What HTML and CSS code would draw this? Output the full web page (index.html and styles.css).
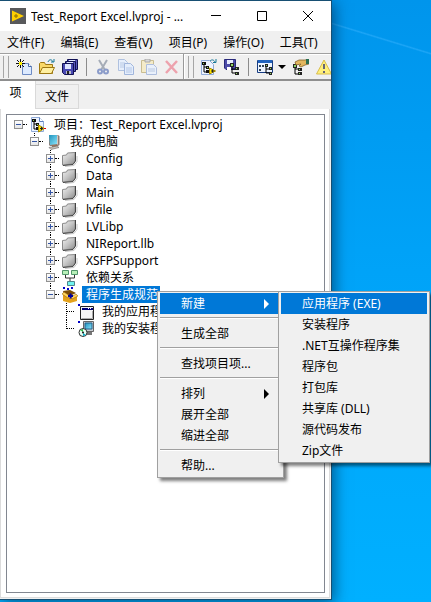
FILE: index.html
```html
<!DOCTYPE html>
<html lang="zh-CN">
<head>
<meta charset="utf-8">
<meta name="viewport" content="width=device-width, initial-scale=1">
<title>Test_Report Excel.lvproj</title>
<link rel="stylesheet" href="styles.css">
</head>
<body>
<svg class="defs" aria-hidden="true">
  <defs>
    <linearGradient id="gray" x1="0" y1="0" x2="1" y2="1"><stop offset="0" stop-color="#f2f2f2"/><stop offset=".5" stop-color="#c4c4c4"/><stop offset="1" stop-color="#8a8a8a"/></linearGradient>
    <linearGradient id="screen" x1="0" y1="0" x2="1" y2="1"><stop offset="0" stop-color="#1f93bd"/><stop offset="1" stop-color="#8be4fb"/></linearGradient>
    <symbol id="folder" viewBox="0 0 16 16"><path d="M3 15.500l9-1 3-4V5" fill="none" stroke="#c8c8c8" stroke-width="1"/><path d="M.500 4.500V14l10.500-1 2-3V1.500L5.500 2l-1 2z" fill="url(#gray)" stroke="#8a8a8a"/><path d="M13.500 1v9L11 13.500l-10 1" fill="none" stroke="#444"/></symbol>
    <symbol id="project" viewBox="0 0 16 16"><path d="M1.500.500h8l4 4v10h-12z" fill="#edf4ff" stroke="#8faad8"/><path d="M9.500.500v4h4" fill="#fff" stroke="#5d80bd"/><path d="M4 4v8h5M4 7h4" fill="none" stroke="#000"/><path d="M2 2h4v3H2zM6 6h3v3H6zM6 10h3v3H6z" fill="#111"/><path d="M3 3h1v1H3zM7 7h1v1H7z" fill="#8ccf60"/><path d="M8.500 8v7l6-3.500z" fill="#ffe600" stroke="#a88900"/><path d="M10 11.500h3M11.500 10v3" stroke="#222"/><path d="M14 11h2v1h-2z" fill="#d00"/></symbol>
    <symbol id="computer" viewBox="0 0 16 16"><path d="M3 1h9l1.500 1v9L12 12H4l-1-1z" fill="#8f7c74"/><path d="M3 1h8v9l-7 1z" fill="url(#screen)"/><path d="M11.500 1.500v9" stroke="#d6c8c0"/><path d="M6 11h5v2H6z" fill="#9a7258"/><path d="M3 13.500l8-1.500 2 1.500-8 2z" fill="#cbc3bc" stroke="#666" stroke-width=".6"/></symbol>
    <symbol id="depend" viewBox="0 0 16 16"><path d="M3.500 5v3h9V5M8 8v3" fill="none" stroke="#333"/><path d="M.500.500h6v4h-6zM9.500.500h6v4h-6z" fill="#b8f0b8" stroke="#51956b"/><path d="M5.500 11.500h7v4h-7z" fill="#70f3f0" stroke="#51858b"/></symbol>
    <symbol id="build" viewBox="0 0 16 16"><path d="M1 4l7-1 6 3-6 3-6-2z" fill="#7c4e05"/><path d="M1 7l7 4v5l-7-2zM8 11l7-3v6l-7 2z" fill="#e4a21b"/><path d="M0 7l2-2 6 4-2 2zM9 10l5-3 2 2-6 3z" fill="#ffd45c" stroke="#8b5b00" stroke-width=".5"/><path d="M6 9h5M8.500 6.500v5" stroke="#0000a0" stroke-width="2"/><path d="M1 0h2v2H1zM5 1h2v2H5zM9 0h2v2H9z" fill="#0000c8"/></symbol>
    <symbol id="app" viewBox="0 0 16 16"><path d="M0 0h2v2H0z" fill="#0000c8"/><path d="M2.500 2.500h13v13h-13z" fill="#f4f4f4" stroke="#222"/><path d="M4 4h11v2H4z" fill="#00007b"/><path d="M10 4h1v1h-1zM12 4h1v1h-1z" fill="#fff"/><path d="M3.500 14.500h11V7" fill="none" stroke="#aaa"/></symbol>
    <symbol id="installer" viewBox="0 0 16 16"><path d="M0 0h2v2H0z" fill="#0000c8"/><path d="M5.500.500h10v10h-10z" fill="#c7cbd0" stroke="#666"/><path d="M7 2h7v6H7z" fill="url(#screen)" stroke="#22628d"/><path d="M8 11h6v3H8z" fill="#777"/><circle cx="5" cy="11.500" r="4" fill="#e9fff3" stroke="#333"/><path d="M5 11V8l-3 1z" fill="#30bd4b"/><path d="M5 12v3l3-1z" fill="#00a9c8"/><circle cx="5" cy="11.500" r="1" fill="#111"/></symbol>
    <symbol id="new" viewBox="0 0 16 16"><path d="M6.500 4.500h6l3 3v8h-9z" fill="#dceaff" stroke="#6d8bc5"/><path d="M12.500 4.500v3h3" fill="#fff" stroke="#4668a5"/><path d="M4.500 0v3M4.500 6v3M0 4.500h3M6 4.500h3M1 1l2 2M6 6l2 2M8 1L6 3M3 6L1 8" stroke="#111"/><path d="M3 3h3v3H3z" fill="#fff200"/></symbol>
    <symbol id="open" viewBox="0 0 16 16"><path d="M.500 14.500v-10l1-1h4l1 2h7v9z" fill="#f9d968" stroke="#9d7813"/><path d="M.500 14.500l3-6h12l-3 6z" fill="#fff0a1" stroke="#9d7813"/><path d="M9 3c1-3 4-3 5 0M12 3h3V0" fill="none" stroke="#167898"/></symbol>
    <symbol id="saveall" viewBox="0 0 16 16"><path d="M5.500.500h10v10h-10z" fill="#5959bf" stroke="#101053"/><path d="M7 1h6v2H7z" fill="#dfe5ff"/><path d="M3.500 2.500h10v10h-10z" fill="#5959bf" stroke="#101053"/><path d="M5 3h6v2H5z" fill="#dfe5ff"/><path d="M.500 4.500h11v11h-9l-2-2z" fill="#4848b2" stroke="#101053"/><path d="M3 5h6v5H3z" fill="#dfe5ff"/><path d="M4 12h5v3H4z" fill="#b8bbc8"/><path d="M5 12h2v3H5z" fill="#222"/></symbol>
    <symbol id="cut" viewBox="0 0 16 16"><path d="M4 1l6 10M12 1L6 11" stroke="#a5acb7" stroke-width="2"/><circle cx="5" cy="12.500" r="2" fill="none" stroke="#8b9cca" stroke-width="2"/><circle cx="11" cy="12.500" r="2" fill="none" stroke="#8b9cca" stroke-width="2"/></symbol>
    <symbol id="copy" viewBox="0 0 16 16"><path d="M.500.500h6l3 3v8h-9z" fill="#e7effc" stroke="#afc1df"/><path d="M2 4h5M2 6h5M2 8h5" stroke="#b9cae5"/><path d="M6.500 4.500h6l3 3v8h-9z" fill="#e4edfb" stroke="#a1b6dc"/><path d="M8 9h6M8 11h6M8 13h6" stroke="#b4c7e8"/></symbol>
    <symbol id="paste" viewBox="0 0 16 16"><path d="M.500 1.500h12v12H.500z" fill="#f4ebc9" stroke="#c9bd91"/><path d="M4 0h5v3H4z" fill="#d9d9d9" stroke="#aaa"/><path d="M5.500 5.500h7l3 3v7h-10z" fill="#e9f0fb" stroke="#aebede"/><path d="M7 10h7M7 12h7" stroke="#b9c8e0"/></symbol>
    <symbol id="delete" viewBox="0 0 16 16"><path d="M2 2l11 12M13 2L2 14" stroke="#eda2ad" stroke-width="2.500"/></symbol>
    <symbol id="disktree" viewBox="0 0 16 16"><path d="M.500.500h11v10H2l-1.500-1.500z" fill="#4c4ca9" stroke="#29297a"/><path d="M3 1h6v4H3z" fill="#e8edff"/><path d="M3 8h4v3H3z" fill="#fff"/><path d="M8 6v8h5M8 10h5" fill="none" stroke="#000"/><path d="M6 4h4v4H6zM11 8h4v3h-4zM11 13h4v3h-4z" fill="#222"/><path d="M7 5h2v2H7zM12 9h1v1h-1zM12 14h1v1h-1z" fill="#8ed565"/></symbol>
    <symbol id="viewtree" viewBox="0 0 16 16"><path d="M.500 1.500h15v12H.500z" fill="#edf4ff" stroke="#173d83"/><path d="M1 1h14v3H1z" fill="#2062bd"/><path d="M2 6h2v2H2zM5 6h2v2H5zM2 10h2v2H2z" fill="#345"/><path d="M9 6v8h5M9 10h5" fill="none" stroke="#000"/><path d="M8 5h3v3H8zM12 8h3v3h-3zM12 13h3v3h-3z" fill="#222"/><path d="M9 6h1v1H9zM13 9h1v1h-1zM13 14h1v1h-1z" fill="#8ed565"/></symbol>
    <symbol id="handtree" viewBox="0 0 16 16"><path d="M2 7v8h5M2 10h5" fill="none" stroke="#000"/><path d="M0 5h4v4H0zM5 9h4v3H5zM5 13h4v3H5z" fill="#222"/><path d="M1 6h2v2H1zM6 10h1v1H6zM6 14h1v1H6z" fill="#8ed565"/><path d="M2 3l4-2h6l4-1v5l-4 1-4 2-2-1 2-2-5 1z" fill="#e2b65e" stroke="#76541a" stroke-width=".7"/><path d="M13 0h3v5h-3z" fill="#296e52"/></symbol>
    <symbol id="warning" viewBox="0 0 16 16"><path d="M8 1l7.500 14H.500z" fill="#fff07b" stroke="#d8bd4d"/><path d="M8 5v5M8 12v2" stroke="#667" stroke-width="2"/></symbol>
    <symbol id="addproject" viewBox="0 0 16 16"><path d="M.500 1.500h8l4 4v10h-12z" fill="#edf4ff" stroke="#8faad8"/><path d="M3 5v8h5M3 8h4" fill="none" stroke="#000"/><path d="M1 3h4v3H1zM5 7h3v3H5zM5 11h3v3H5z" fill="#111"/><path d="M2 4h1v1H2zM6 8h1v1H6z" fill="#8ccf60"/><path d="M8.500 9v6l6-3z" fill="#ffe600" stroke="#a88900"/><path d="M10 12h3M11.500 10.500v3" stroke="#222"/><path d="M9 2c2-2 4-1 5 1M12 3.500h3V0" fill="none" stroke="#167898"/></symbol>
  </defs>
</svg>

<main class="window">
  <header class="titlebar">
    <svg class="logo" viewBox="0 0 16 16" aria-hidden="true"><path d="M0 0h16v16H0z" fill="#58595b"/><path d="M2 2.500v11L14 8z" fill="#ffcf00"/><path d="M4 8h4M6 6v4" stroke="#8a6a00"/></svg>
    <h1>Test_Report Excel.lvproj - ...</h1>
    <div class="controls">
      <button aria-label="最小化"><svg viewBox="0 0 12 12"><path d="M1 5.500h10"/></svg></button>
      <button aria-label="最大化"><svg viewBox="0 0 12 12"><path d="M1.500 1.500h9v9h-9z"/></svg></button>
      <button aria-label="关闭"><svg viewBox="0 0 12 12"><path d="M1 1l10 10M11 1L1 11"/></svg></button>
    </div>
  </header>
  <nav class="menubar">
    <button>文件(F)</button><button>编辑(E)</button><button>查看(V)</button><button>项目(P)</button><button>操作(O)</button><button>工具(T)</button>
  </nav>
  <div class="toolbar" role="toolbar">
    <span class="grip"></span>
    <button aria-label="新建"><svg><use href="#new"/></svg></button>
    <button aria-label="打开"><svg><use href="#open"/></svg></button>
    <button aria-label="全部保存"><svg><use href="#saveall"/></svg></button>
    <span class="rule"></span>
    <button aria-label="剪切" disabled><svg><use href="#cut"/></svg></button>
    <button aria-label="复制" disabled><svg><use href="#copy"/></svg></button>
    <button aria-label="粘贴" disabled><svg><use href="#paste"/></svg></button>
    <button aria-label="删除" disabled><svg><use href="#delete"/></svg></button>
    <span class="edge"></span>
    <span class="grip"></span>
    <button aria-label="添加到项目"><svg><use href="#addproject"/></svg></button>
    <button aria-label="保存项目"><svg><use href="#disktree"/></svg></button>
    <span class="rule"></span>
    <button class="split" aria-label="显示选项"><svg><use href="#viewtree"/></svg><i class="caret"></i></button>
    <button aria-label="属性"><svg><use href="#handtree"/></svg></button>
    <button aria-label="警告"><svg><use href="#warning"/></svg></button>
  </div>
  <div class="tabs" role="tablist">
    <button class="tab active" role="tab" aria-selected="true">项</button>
    <button class="tab" role="tab" aria-selected="false">文件</button>
  </div>
  <section class="panel" role="tabpanel">
    <div class="tree">
      <ul>
        <li>
          <div class="row"><button class="toggle open" aria-label="折叠"></button><svg><use href="#project"/></svg><span>项目：Test_Report Excel.lvproj</span></div>
          <ul>
            <li>
              <div class="row"><button class="toggle open" aria-label="折叠"></button><svg><use href="#computer"/></svg><span>我的电脑</span></div>
              <ul>
                <li><div class="row"><button class="toggle" aria-label="展开"></button><svg><use href="#folder"/></svg><span>Config</span></div></li>
                <li><div class="row"><button class="toggle" aria-label="展开"></button><svg><use href="#folder"/></svg><span>Data</span></div></li>
                <li><div class="row"><button class="toggle" aria-label="展开"></button><svg><use href="#folder"/></svg><span>Main</span></div></li>
                <li><div class="row"><button class="toggle" aria-label="展开"></button><svg><use href="#folder"/></svg><span>lvfile</span></div></li>
                <li><div class="row"><button class="toggle" aria-label="展开"></button><svg><use href="#folder"/></svg><span>LVLibp</span></div></li>
                <li><div class="row"><button class="toggle" aria-label="展开"></button><svg><use href="#folder"/></svg><span>NIReport.llb</span></div></li>
                <li><div class="row"><button class="toggle" aria-label="展开"></button><svg><use href="#folder"/></svg><span>XSFPSupport</span></div></li>
                <li><div class="row"><button class="toggle" aria-label="展开"></button><svg><use href="#depend"/></svg><span>依赖关系</span></div></li>
                <li>
                  <div class="row"><button class="toggle open" aria-label="折叠"></button><svg><use href="#build"/></svg><span class="selected">程序生成规范</span></div>
                  <ul>
                    <li><div class="row leaf"><svg><use href="#app"/></svg><span>我的应用程序</span></div></li>
                    <li><div class="row leaf"><svg><use href="#installer"/></svg><span>我的安装程序</span></div></li>
                  </ul>
                </li>
              </ul>
            </li>
          </ul>
        </li>
      </ul>
    </div>
  </section>
</main>

<div class="menu context" role="menu">
  <button class="current more" role="menuitem">新建</button>
  <hr>
  <button role="menuitem">生成全部</button>
  <hr>
  <button role="menuitem">查找项目项...</button>
  <hr>
  <button class="more" role="menuitem">排列</button>
  <button role="menuitem">展开全部</button>
  <button role="menuitem">缩进全部</button>
  <hr>
  <button role="menuitem">帮助...</button>
</div>
<div class="menu submenu" role="menu">
  <button class="current" role="menuitem">应用程序 (EXE)</button>
  <button role="menuitem">安装程序</button>
  <button role="menuitem">.NET互操作程序集</button>
  <button role="menuitem">程序包</button>
  <button role="menuitem">打包库</button>
  <button role="menuitem">共享库 (DLL)</button>
  <button role="menuitem">源代码发布</button>
  <button role="menuitem">Zip文件</button>
</div>
</body>
</html>
```
FILE: styles.css
```css
* { box-sizing: border-box; }

body {
  position: relative;
  display: flex;
  min-height: 100vh;
  margin: 0;
  padding: 0 99px 2px 0;
  overflow: hidden;
  background:
    linear-gradient(17deg, transparent 48%, rgba(60, 180, 255, .5) 50%, transparent 52%) 331px 20px / 110px 40px no-repeat,
    linear-gradient(#0095ec, #00a3f8 45%, #00b0ff);
  color: #000;
  font: 12px/17px "Noto Sans", "Noto Sans CJK SC", sans-serif;
}

button {
  margin: 0;
  padding: 0;
  border: 0;
  background: none;
  color: inherit;
  font: inherit;
  white-space: nowrap;
}

svg { display: block; flex: none; width: 16px; height: 16px; }
.defs { position: absolute; width: 0; height: 0; }

.window {
  display: flex;
  flex: 1;
  flex-direction: column;
  min-width: 0;
  overflow: hidden;
  border: 1px solid #174f73;
  border-left: 0;
  background: #f0f0f0;
  box-shadow: 2px 3px 14px rgba(0, 30, 60, .6);
}

.titlebar {
  display: flex;
  align-items: center;
  height: 30px;
  padding-left: 10px;
  background: #fff;
}
.titlebar h1 {
  flex: 1;
  min-width: 0;
  margin: 0 0 0 5px;
  overflow: hidden;
  font-size: 12px;
  font-weight: 400;
  white-space: nowrap;
}
.controls { display: flex; }
.controls button { display: grid; place-items: center; width: 46px; height: 30px; }
.controls svg { width: 12px; height: 12px; fill: none; stroke: #000; }

.menubar { display: flex; gap: 16px; height: 22px; padding-left: 7px; }

.toolbar {
  display: flex;
  flex: none;
  align-items: center;
  gap: 7px;
  height: 28px;
  padding-left: 3px;
  overflow: hidden;
  border-top: 1px solid #a0a0a0;
  border-bottom: 2px solid #8e8e8e;
  box-shadow: inset 0 1px #fff;
}
.toolbar > * { flex: none; }
.grip { width: 6px; height: 22px; border: solid #a6a6a6; border-width: 0 1px; }
.rule { width: 1px; height: 18px; margin: 0 1px; background: #8c8c8c; }
.edge { width: 2px; height: 25px; margin: 0 -4px 0 -4px; border-left: 1px solid #999; background: #fff; }
.split { display: flex; align-items: center; gap: 5px; }
.caret { border: 4px solid transparent; border-top-color: #000; border-bottom: 0; }

.tabs { display: flex; align-items: flex-end; height: 28px; }
.tab { width: 43px; height: 25px; border: 1px solid #d9d9d9; border-left: 0; }
.tab.active { width: 36px; height: 28px; padding: 0 4px 5px 0; border: 0; border-right: 1px solid #d9d9d9; background: #fff; }

.panel {
  display: flex;
  flex: 1;
  margin: 0 1px 1px 0;
  padding: 5px 4px 4px 5px;
  border: 1px solid #dcdcdc;
  border-top: 0;
  background: #fff;
}
.tree { flex: 1; min-width: 0; padding-top: 1px; overflow: hidden; border: 1px solid #828790; background: #fff; }
.tree ul { margin: 0; padding: 0; list-style: none; }
.tree ul ul { padding-left: 16px; }
.tree li { position: relative; }
.tree ul ul > li::before {
  position: absolute;
  top: 0;
  bottom: 0;
  left: 11px;
  border-left: 1px dotted #000;
  content: "";
}
.tree ul ul > li:last-child::before { bottom: auto; height: 9px; }

.row { position: relative; display: flex; align-items: center; height: 17px; padding-left: 7px; }
.row span { margin-left: 4px; padding: 0 2px 0 4px; white-space: nowrap; }
.row .selected { background: #0078d7; color: #fff; }
.row::before { order: 1; width: 4px; margin-right: 3px; border-top: 1px dotted #000; content: ""; }
.row svg { order: 2; }
.row span { order: 3; }
.row.leaf::before { width: 7px; margin: 0 4px 0 5px; }

.toggle {
  width: 9px;
  height: 9px;
  border: 1px solid #919191;
  background:
    linear-gradient(#3455a4, #3455a4) center / 5px 1px no-repeat,
    linear-gradient(#3455a4, #3455a4) center / 1px 5px no-repeat,
    linear-gradient(#fff, #e6e6e6);
}
.toggle.open {
  background:
    linear-gradient(#3455a4, #3455a4) center / 5px 1px no-repeat,
    linear-gradient(#fff, #e6e6e6);
}

.menu {
  position: absolute;
  top: 291px;
  display: flex;
  flex-direction: column;
  padding: 1px 2px;
  border: 1px solid #a0a0a0;
  background: #f0f0f0;
  box-shadow: 3px 3px 3px rgba(0, 0, 0, .5);
}
.menu button { height: 21px; padding: 0 21px; line-height: 19px; text-align: left; }
.menu .current { background: #0078d7; color: #fff; }
.menu .more { display: flex; align-items: center; justify-content: space-between; padding-right: 12px; }
.menu .more::after { border: 5px solid transparent; border-right: 0; border-left-color: currentColor; content: ""; }
.menu hr { width: 100%; height: 2px; margin: 3px 0 4px; border: solid; border-width: 1px 0; border-color: #a0a0a0 transparent #fff; }
.context { left: 157px; width: 127px; }
.submenu { left: 278px; width: 152px; }
```
